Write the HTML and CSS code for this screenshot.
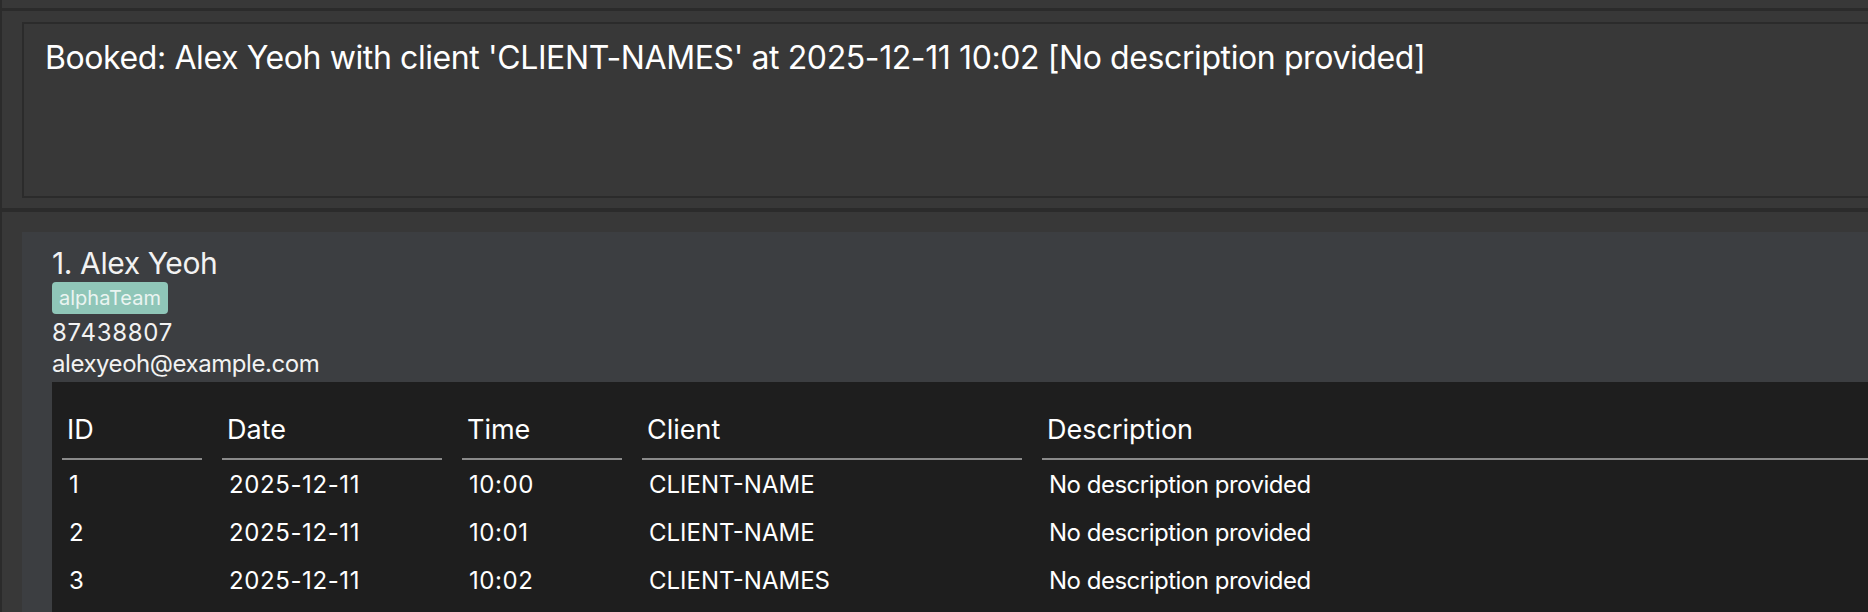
FILE: index.html
```html
<!DOCTYPE html>
<html lang="en">
<head>
<meta charset="utf-8">
<title>Address Book</title>
<link rel="stylesheet" href="styles.css">
</head>
<body>
<div class="app">
  <div class="command-strip"></div>
  <section class="result-panel">
    <div class="result-box">Booked: Alex Yeoh with client 'CLIENT-NAMES' at 2025-12-11 10:02 [No description provided]</div>
  </section>
  <section class="list-panel">
    <div class="card">
      <div class="name">1. Alex Yeoh</div>
      <div class="tags"><span class="tag">alphaTeam</span></div>
      <div class="detail phone">87438807</div>
      <div class="detail email">alexyeoh@example.com</div>
      <div class="table">
        <div class="th">ID</div>
        <div class="th">Date</div>
        <div class="th">Time</div>
        <div class="th">Client</div>
        <div class="th">Description</div>

        <div class="td num">1</div>
        <div class="td num">2025-12-11</div>
        <div class="td num">10:00</div>
        <div class="td">CLIENT-NAME</div>
        <div class="td desc">No description provided</div>

        <div class="td num">2</div>
        <div class="td num">2025-12-11</div>
        <div class="td num">10:01</div>
        <div class="td">CLIENT-NAME</div>
        <div class="td desc">No description provided</div>

        <div class="td num">3</div>
        <div class="td num">2025-12-11</div>
        <div class="td num">10:02</div>
        <div class="td">CLIENT-NAMES</div>
        <div class="td desc">No description provided</div>
      </div>
    </div>
  </section>
</div>
</body>
</html>
```

FILE: styles.css
```css
html, body {
  margin: 0;
  padding: 0;
}

body {
  width: 1868px;
  height: 612px;
  overflow: hidden;
  background: #383838;
  font-family: Inter, "Liberation Sans", sans-serif;
  color: #ffffff;
}

.app {
  display: flex;
  flex-direction: column;
  height: 612px;
  border-left: 2px solid #2b2b2b;
  box-sizing: border-box;
}

.command-strip {
  height: 8px;
  border-bottom: 3px solid #2b2b2b;
  flex: none;
}

.result-panel {
  flex: none;
  padding: 11px 0 10px 20px;
  border-bottom: 4px solid #2b2b2b;
}

.result-box {
  border: 2px solid #2b2b2b;
  border-right: none;
  box-sizing: content-box;
  padding: 15px 0 0 21px;
  height: 157px;
  font-size: 32px;
  line-height: 38px;
  letter-spacing: -0.4px;
  color: #ffffff;
  white-space: nowrap;
}

.list-panel {
  flex: 1;
  padding: 20px 0 0 20px;
  overflow: hidden;
}

.card {
  background: #3c3e41;
  padding: 13px 0 0 30px;
  height: 100%;
  box-sizing: border-box;
  display: flex;
  flex-direction: column;
  align-items: flex-start;
}

.name {
  font-size: 30px;
  line-height: 36px;
  letter-spacing: -0.4px;
  color: #f2f2f2;
}

.tags {
  margin-top: 1px;
  display: flex;
}

.tag {
  background: #8fc6b8;
  color: #eaf4f1;
  font-size: 20px;
  line-height: 32px;
  padding: 0 7px;
  border-radius: 4px;
}

.detail {
  font-size: 24px;
  line-height: 31px;
  color: #f2f2f2;
}

.phone {
  margin-top: 3px;
  letter-spacing: 0.7px;
}

.email {
  letter-spacing: -0.45px;
}

.table {
  margin-top: 3px;
  align-self: stretch;
  flex: 1;
  background: #1e1e1e;
  padding-left: 10px;
  display: grid;
  grid-template-columns: 140px 220px 160px 380px 1fr;
  grid-auto-rows: min-content;
  column-gap: 20px;
  align-content: start;
}

.th {
  font-size: 27px;
  line-height: 32px;
  padding: 32px 5px 12px;
  border-bottom: 2px solid #8a8a8a;
  color: #ffffff;
}

.td {
  font-size: 24px;
  line-height: 46px;
  padding: 2px 7px 0;
  color: #ffffff;
}

.td.num {
  letter-spacing: 0.6px;
}

.td.desc {
  letter-spacing: -0.5px;
}
```
